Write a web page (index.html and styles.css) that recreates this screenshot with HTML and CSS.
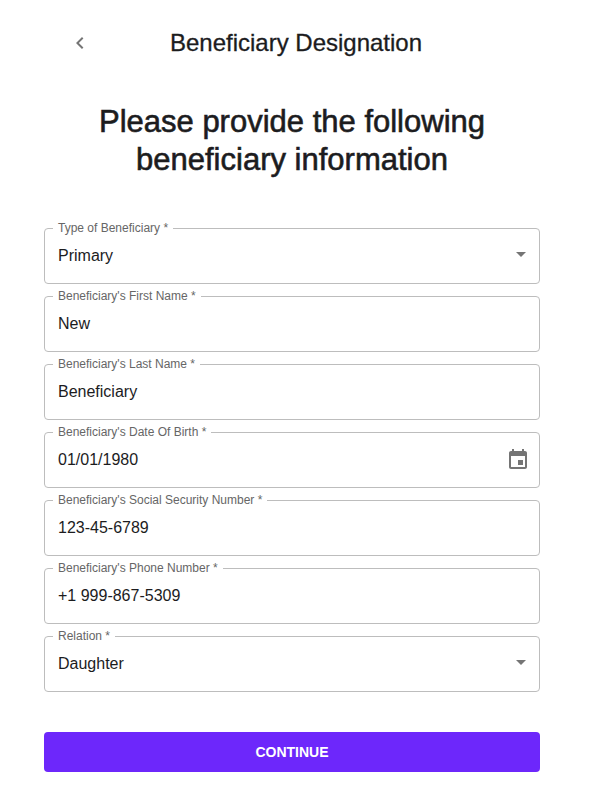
FILE: index.html
```
<!DOCTYPE html>
<html lang="en">
<head>
    <meta charset="UTF-8">
    <meta name="viewport" content="width=device-width, initial-scale=1.0">
    <title>Beneficiary Designation</title>
    <link rel="stylesheet" href="styles.css">
</head>
<body>
    <header class="topbar">
        <button class="back" type="button" aria-label="Back">
            <svg viewBox="0 0 24 24"><path d="M15.41 7.41 14 6l-6 6 6 6 1.41-1.41L10.83 12z"/></svg>
        </button>
        <h1 class="title">Beneficiary Designation</h1>
    </header>

    <main>
        <h2 class="heading">Please provide the following beneficiary information</h2>

        <form class="form">
            <fieldset class="field">
                <legend><label for="type">Type of Beneficiary *</label></legend>
                <select id="type">
                    <option>Primary</option>
                    <option>Contingent</option>
                </select>
                <svg class="arrow" viewBox="0 0 24 24"><path d="m7 10 5 5 5-5z"/></svg>
            </fieldset>
            <fieldset class="field">
                <legend><label for="first">Beneficiary's First Name *</label></legend>
                <input id="first" type="text" value="New">
            </fieldset>
            <fieldset class="field">
                <legend><label for="last">Beneficiary's Last Name *</label></legend>
                <input id="last" type="text" value="Beneficiary">
            </fieldset>
            <fieldset class="field">
                <legend><label for="dob">Beneficiary's Date Of Birth *</label></legend>
                <input id="dob" type="text" value="01/01/1980">
                <button class="calendar" type="button" aria-label="Choose date">
                    <svg viewBox="0 0 24 24"><path d="M17 12h-5v5h5v-5zM16 1v2H8V1H6v2H5c-1.11 0-1.99.9-1.99 2L3 19c0 1.1.89 2 2 2h14c1.1 0 2-.9 2-2V5c0-1.1-.9-2-2-2h-1V1h-2zm3 18H5V8h14v11z"/></svg>
                </button>
            </fieldset>
            <fieldset class="field">
                <legend><label for="ssn">Beneficiary's Social Security Number *</label></legend>
                <input id="ssn" type="text" value="123-45-6789">
            </fieldset>
            <fieldset class="field">
                <legend><label for="phone">Beneficiary's Phone Number *</label></legend>
                <input id="phone" type="tel" value="+1 999-867-5309">
            </fieldset>
            <fieldset class="field">
                <legend><label for="relation">Relation *</label></legend>
                <select id="relation">
                    <option>Daughter</option>
                    <option>Son</option>
                    <option>Spouse</option>
                </select>
                <svg class="arrow" viewBox="0 0 24 24"><path d="m7 10 5 5 5-5z"/></svg>
            </fieldset>

            <button class="continue" type="submit">CONTINUE</button>
        </form>
    </main>
</body>
</html>
```

FILE: styles.css
```
* {
    box-sizing: border-box;
}

body {
    margin: 0;
    padding: 24px 55px 28px 44px;
    background: #fff;
    color: #1c1c1e;
    font-family: "Liberation Sans", Arial, sans-serif;
}

.topbar {
    display: grid;
    grid-template-columns: 72px 1fr 64px;
    align-items: center;
    height: 38px;
}

.back {
    justify-self: center;
    display: flex;
    padding: 0;
    border: 0;
    background: none;
    cursor: pointer;
}

svg {
    width: 24px;
    height: 24px;
    fill: #757575;
}

.title {
    margin: 0;
    font-size: 24px;
    font-weight: 400;
    line-height: 32px;
    text-align: center;
    white-space: nowrap;
    -webkit-text-stroke: 0.3px;
}

.heading {
    max-width: 400px;
    margin: 41px auto 0;
    font-size: 31px;
    font-weight: 400;
    line-height: 38px;
    text-align: center;
    -webkit-text-stroke: 0.6px;
}

.form {
    display: flex;
    flex-direction: column;
    gap: 6px;
    margin-top: 43px;
}

.field {
    display: flex;
    align-items: center;
    min-width: 0;
    min-height: 62px;
    margin: 0;
    padding: 0 9px 4px 8px;
    border: 1px solid #bdbdbd;
    border-radius: 4px;
}

.field:focus-within {
    border-color: #6d27fb;
}

legend {
    height: 12px;
    padding: 0 5px;
    color: #666;
    font-size: 12px;
    line-height: 12px;
}

.field input,
.field select {
    flex: 1;
    min-width: 0;
    height: 44px;
    padding: 0 5px;
    border: 0;
    outline: 0;
    appearance: none;
    background: none;
    color: #1c1c1e;
    font-family: inherit;
    font-size: 16px;
}

.field select {
    padding-bottom: 2px;
}

.arrow {
    margin: 0 -3px 4px 0;
    pointer-events: none;
}

.calendar {
    display: flex;
    padding: 0;
    border: 0;
    background: none;
    cursor: pointer;
}

.continue {
    height: 40px;
    margin-top: 34px;
    border: 0;
    border-radius: 4px;
    background: #6d27fb;
    color: #fff;
    font-family: inherit;
    font-size: 14px;
    font-weight: 700;
    cursor: pointer;
}
```
